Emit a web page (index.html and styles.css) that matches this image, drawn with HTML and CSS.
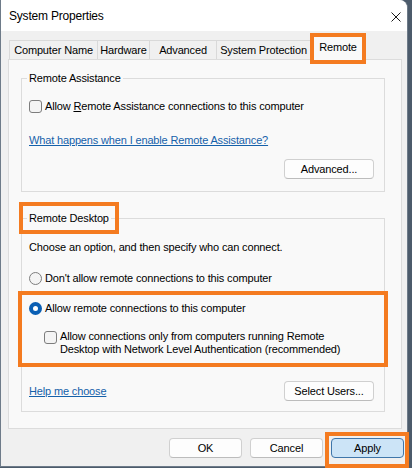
FILE: index.html
```html
<!DOCTYPE html>
<html lang="en">
<head>
    <meta charset="UTF-8" />
    <meta name="viewport" content="width=device-width, initial-scale=1.0" />
    <title>System Properties</title>
    <link rel="stylesheet" href="styles.css">
</head>
<body>
    <div class="window">
        <div class="titlebar">
            <span class="title">System Properties</span>
            <svg class="close" width="10" height="10" viewBox="0 0 10 10">
                <path d="M0.5 0.5 L9.5 9.5 M9.5 0.5 L0.5 9.5" stroke="#1a1a1a" stroke-width="1" fill="none" />
            </svg>
        </div>

        <div class="tabs">
            <div class="tab tab-name">Computer Name</div>
            <div class="tab tab-hardware">Hardware</div>
            <div class="tab tab-advanced">Advanced</div>
            <div class="tab tab-protection">System Protection</div>
            <div class="tab active">Remote</div>
        </div>

        <div class="panel">
            <fieldset class="group assistance">
                <legend>Remote Assistance</legend>
                <div class="option">
                    <span class="checkbox"></span>
                    <span>Allow <u>R</u>emote Assistance connections to this computer</span>
                </div>
                <a class="link help-link" href="#">What happens when I enable Remote Assistance?</a>
                <div class="row-end">
                    <button class="btn">Advanced...</button>
                </div>
            </fieldset>

            <fieldset class="group desktop">
                <legend>Remote Desktop</legend>
                <p class="intro">Choose an option, and then specify who can connect.</p>
                <div class="option radio-first">
                    <span class="radio"></span>
                    <span>Don't allow remote connections to this computer</span>
                </div>
                <div class="option radio-second">
                    <span class="radio checked"></span>
                    <span>Allow remote connections to this computer</span>
                </div>
                <div class="option nested">
                    <span class="checkbox"></span>
                    <span class="two-lines">Allow connections only from computers running Remote<br>Desktop with Network Level Authentication (recommended)</span>
                </div>
                <div class="row-split">
                    <a class="link" href="#">Help me choose</a>
                    <button class="btn">Select Users...</button>
                </div>
            </fieldset>
        </div>

        <div class="actions">
            <button class="btn wide">OK</button>
            <button class="btn wide">Cancel</button>
            <button class="btn wide default">Apply</button>
        </div>

        <div class="mark mark-tab"></div>
        <div class="mark mark-legend"></div>
        <div class="mark mark-options"></div>
        <div class="mark mark-apply"></div>
    </div>
</body>
</html>
```

FILE: styles.css
```css
body {
    margin: 0;
    background-color: #4c5b6b;
    font-family: "Liberation Sans", Arial, sans-serif;
    font-size: 11px;
    letter-spacing: -0.15px;
    color: #000000;
    height: 468px;
    overflow: hidden;
}

.window {
    position: relative;
    width: 406px;
    height: 466px;
    background-color: #f0f0f0;
    border: 1px solid #6e7b89;
    border-top: none;
    border-top-right-radius: 8px;
    display: flex;
    flex-direction: column;
}

.titlebar {
    height: 31px;
    flex-shrink: 0;
    background-color: #ffffff;
    border-top-right-radius: 8px;
    display: flex;
    align-items: center;
    justify-content: space-between;
    padding: 0 6px 0 8px;
}

.title {
    font-size: 12px;
    letter-spacing: -0.2px;
    line-height: 16px;
    padding-top: 1px;
}

.close {
    margin-top: 2px;
}

/* tabs */
.tabs {
    height: 28px;
    flex-shrink: 0;
    display: flex;
    align-items: flex-end;
    padding-left: 8px;
    position: relative;
    z-index: 1;
}

.tab {
    box-sizing: border-box;
    height: 19px;
    line-height: 18px;
    text-align: center;
    white-space: nowrap;
    border: 1px solid #d9d9d9;
    border-bottom: none;
    margin-right: -1px;
    background-color: #f0f0f0;
}

.tab-name {
    width: 89px;
}

.tab-hardware {
    width: 53px;
}

.tab-advanced {
    width: 68px;
}

.tab-protection {
    width: 95px;
}

.tab.active {
    width: 56px;
    height: 25px;
    line-height: 22px;
    margin: 0 0 -1px 0;
    background-color: #f9f9f9;
    position: relative;
}

/* panel */
.panel {
    margin: 0 5px 0 7px;
    border: 1px solid #dcdcdc;
    background-color: #f9f9f9;
    padding: 10px 16px 16px 12px;
}

.group {
    margin: 0;
    padding: 0 10px 10px 7px;
    border: 1px solid #dcdcdc;
    min-width: 0;
}

.group legend {
    padding: 0 2px;
    margin-left: -2px;
    line-height: 16px;
}

.assistance {
    padding-bottom: 12px;
}

.desktop {
    margin-top: 18px;
}

.option {
    display: flex;
    align-items: center;
    gap: 3px;
    line-height: 16px;
    white-space: nowrap;
}

.assistance .option {
    margin-top: 12px;
}

.checkbox {
    width: 11px;
    height: 11px;
    border: 1px solid #7d7d7d;
    border-radius: 3px;
    background-color: #f4f4f4;
    flex-shrink: 0;
}

.radio {
    width: 11px;
    height: 11px;
    border: 1px solid #7d7d7d;
    border-radius: 50%;
    background-color: #f4f4f4;
    flex-shrink: 0;
    box-sizing: content-box;
}

.radio.checked {
    width: 5px;
    height: 5px;
    border: 4px solid #0a5fb4;
    background-color: #ffffff;
}

.link {
    color: #1561aa;
    text-decoration: underline;
    line-height: 16px;
}

.help-link {
    display: block;
    margin-top: 18px;
}

.row-end {
    display: flex;
    justify-content: flex-end;
    margin-top: 11px;
}

.btn {
    font-family: "Liberation Sans", Arial, sans-serif;
    font-size: 11px;
    letter-spacing: -0.15px;
    color: #000000;
    height: 20px;
    width: 90px;
    padding: 0;
    background-color: #fdfdfd;
    border: 1px solid #d0d0d0;
    border-bottom-color: #bcbcbc;
    border-radius: 4px;
}

.intro {
    margin: 13px 0 0;
    line-height: 16px;
}

.radio-first {
    margin-top: 15px;
}

.radio-second {
    margin-top: 14px;
}

.nested {
    margin-top: 14px;
    margin-left: 15px;
    align-items: flex-start;
}

.nested .checkbox {
    margin-top: 1px;
}

.two-lines {
    line-height: 13px;
}

.row-split {
    display: flex;
    justify-content: space-between;
    align-items: center;
    margin-top: 25px;
}

/* dialog buttons */
.actions {
    display: flex;
    justify-content: flex-end;
    gap: 8px;
    margin-top: 9px;
    padding-right: 3px;
}

.btn.wide {
    width: 73px;
}

.btn.default {
    background-color: #cce4f7;
    border: 1px solid #3f76aa;
}

/* orange annotation frames */
.mark {
    position: absolute;
    border: 4px solid #f47b20;
    box-sizing: border-box;
    z-index: 2;
}

.mark-tab {
    left: 309px;
    top: 33px;
    width: 56px;
    height: 31px;
}

.mark-legend {
    left: 18px;
    top: 202px;
    width: 100px;
    height: 32px;
}

.mark-options {
    left: 17px;
    top: 291px;
    width: 370px;
    height: 76px;
}

.mark-apply {
    left: 324px;
    top: 432px;
    width: 84px;
    height: 36px;
}
```
